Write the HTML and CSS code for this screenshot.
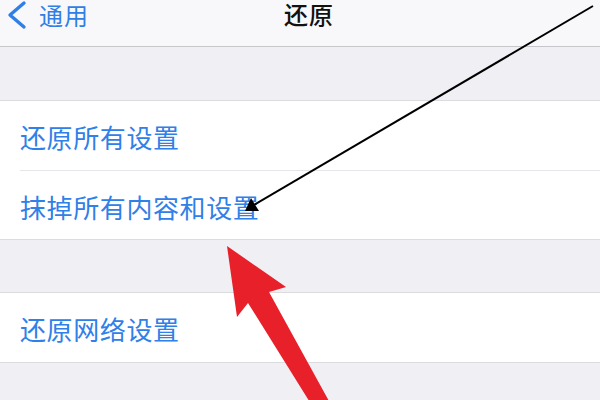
FILE: index.html
```html
<!DOCTYPE html>
<html lang="zh-CN">
<head>
<meta charset="utf-8">
<title>还原</title>
<link rel="stylesheet" href="styles.css">
</head>
<body>
<div class="screen">
  <header class="nav">
    <div class="back">
      <svg class="chev" width="30" height="30" viewBox="0 0 30 30"><path d="M24 3 L10 15 L24 27" fill="none" stroke="#2f7fe6" stroke-width="3.4" stroke-linecap="round" stroke-linejoin="round"/></svg>
      <span class="back-label">通用</span>
    </div>
    <div class="title">还原</div>
  </header>
  <div class="spacer"></div>
  <section class="group">
    <div class="row">还原所有设置</div>
    <div class="row sep">抹掉所有内容和设置</div>
  </section>
  <div class="spacer s2"></div>
  <section class="group">
    <div class="row">还原网络设置</div>
  </section>
  <svg class="annot" width="600" height="400" viewBox="0 0 600 400">
    <line x1="593" y1="6" x2="254" y2="205" stroke="#000" stroke-width="2"/>
    <polygon points="245,211 251,198 259,211" fill="#000"/>
    <polygon points="227,246 286,287 269,292 335,412 316,412 248,303 237,317" fill="#e8202a"/>
  </svg>
</div>
</body>
</html>
```
FILE: styles.css
```css
html, body {
  margin: 0;
  padding: 0;
}
body {
  background: #efeff4;
  font-family: "Noto Sans CJK SC", "Noto Sans", sans-serif;
}
.screen {
  position: relative;
  width: 600px;
  height: 400px;
  overflow: hidden;
  background: #efeff4;
}
.nav {
  height: 46px;
  background: #f8f8fa;
  border-bottom: 1px solid #c6c6cb;
  display: flex;
  align-items: flex-start;
}
.back {
  display: flex;
  align-items: center;
  height: 30px;
}
.chev {
  display: block;
}
.back-label {
  color: #2f7fe6;
  font-size: 24px;
  line-height: 30px;
  margin-left: 9px;
  letter-spacing: 1px;
}
.title {
  margin-left: 195px;
  font-size: 24px;
  font-weight: 500;
  color: #111;
  line-height: 28px;
  letter-spacing: 1px;
}
.spacer {
  height: 53px;
}
.s2 {
  height: 52px;
}
.group {
  background: #fff;
  border-top: 1px solid #dcdce0;
  border-bottom: 1px solid #dcdce0;
  padding-left: 20px;
}
.row {
  height: 69px;
  display: flex;
  align-items: center;
  font-size: 26px;
  color: #2f80e8;
  padding-top: 2px;
  box-sizing: border-box;
  letter-spacing: 0.6px;
}
.sep {
  border-top: 1px solid #e6e6ea;
}
.annot {
  position: absolute;
  left: 0;
  top: 0;
}
```
